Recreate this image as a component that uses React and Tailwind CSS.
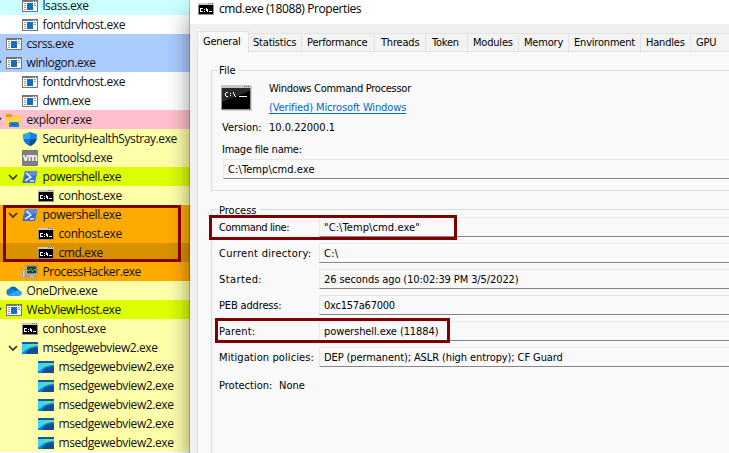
import React from "react";

const AppIcon = () => (
  <svg className="size-4 shrink-0" viewBox="0 0 16 16" shapeRendering="crispEdges">
    <rect x="0" y="2" width="16" height="12" fill="#747474" />
    <rect x="1" y="4" width="14" height="9" fill="#fff" />
    <rect x="5" y="5" width="6" height="7" fill="#0f70c4" />
    <rect x="2" y="5" width="2" height="1" fill="#999" />
    <rect x="2" y="7" width="2" height="1" fill="#999" />
    <rect x="2" y="9" width="2" height="1" fill="#999" />
    <rect x="2" y="11" width="2" height="1" fill="#999" />
    <rect x="12" y="5" width="2" height="1" fill="#999" />
    <rect x="12" y="7" width="2" height="1" fill="#999" />
    <rect x="11" y="3" width="1" height="1" fill="#ddd" />
    <rect x="13" y="3" width="1" height="1" fill="#ddd" />
  </svg>
);

const ConsoleIcon = () => (
  <svg className="size-4 shrink-0" viewBox="0 0 16 16" shapeRendering="crispEdges">
    <rect x="0" y="2" width="16" height="12" fill="#8d9196" />
    <rect x="0" y="2" width="16" height="2" fill="#c5cbd2" />
    <rect x="10" y="2" width="1" height="1" fill="#68717c" />
    <rect x="12" y="2" width="1" height="1" fill="#68717c" />
    <rect x="14" y="2" width="1" height="1" fill="#68717c" />
    <rect x="1" y="4" width="14" height="9" fill="#000" />
    <path
      d="M3 7h2v1h-2zM2 7h1v4h-1zM3 10h2v1h-2zM6 8h1v1h-1zM6 10h1v1h-1zM8 7h1v3h-1zM9 8h1v3h-1zM11 10h3v1h-3z"
      fill="#fff"
    />
  </svg>
);

const PowerShellIcon = () => (
  <svg className="size-4 shrink-0" viewBox="0 0 16 16">
    <path d="M3 2h12.400L13 14H.3z" fill="#3d6fd0" />
    <path d="M3 2h12.400l-.9 4.400H2z" fill="#5c8ae0" />
    <path d="M4.600 4.300l4.200 3.800-5.600 3.700" fill="none" stroke="#fff" strokeWidth="1.400" />
    <path d="M8 11.900h4" stroke="#fff" strokeWidth="1.300" />
  </svg>
);

const FolderIcon = () => (
  <svg className="size-4 shrink-0" viewBox="0 0 16 16">
    <path d="M0 2.800q0-.8.8-.8h4.400l1.600 1.700H16V8H0z" fill="#e2a008" />
    <path d="M0 5h5.600l1.200-1.200h8.400q.8 0 .8.8v8.600q0 .8-.8.8H.8q-.8 0-.8-.8z" fill="#ffd257" />
    <path d="M3 15v-3.500q0-1.500 1.500-1.500h7q1.500 0 1.500 1.500V15z" fill="#1a87d6" />
    <path d="M5 12.500h6" stroke="#0d5c9f" strokeWidth="1.200" />
  </svg>
);

const ShieldIcon = () => (
  <svg className="size-4 shrink-0" viewBox="0 0 16 16">
    <path d="M8 1q3 2 6.600 2v4.500Q14.500 12 8 15.300 1.500 12 1.300 7.500V3Q5 3 8 1z" fill="#0f77cf" />
    <path d="M8 1v7H1.300V3Q5 3 8 1z" fill="#28a9ea" />
    <path d="M8 8h6.600Q14.200 12.200 8 15.300z" fill="#0a4f9e" />
    <path d="M8 1q3 2 6.600 2v5H8z" fill="#1484da" />
  </svg>
);

const VmIcon = () => (
  <div className="flex size-4 shrink-0 items-center justify-center rounded-[1px] border border-[#777] bg-[#808080] font-['Open_Sans',sans-serif] text-[10px] font-bold leading-none tracking-[-0.6px] text-white">
    <span className="pb-[2px]">vm</span>
  </div>
);

const HackerIcon = () => (
  <svg className="size-4 shrink-0" viewBox="0 0 16 16">
    <rect x=".3" y="6" width="2.700" height="7.500" fill="#d4d4ce" stroke="#777" strokeWidth=".5" />
    <rect x="4" y="1.300" width="11.500" height="9.700" fill="#d7d7d7" stroke="#777" strokeWidth=".6" />
    <rect x="5" y="2.300" width="9.500" height="7.200" fill="#2b3a2e" />
    <path d="M5 6.500h2l1.500-2 2 3L12 5.500h2.500" fill="none" stroke="#35d456" />
    <path d="M8 11h4v1.500h2V14H5v-1.500h3z" fill="#c4c4c4" stroke="#777" strokeWidth=".4" />
  </svg>
);

const CloudIcon = () => (
  <svg className="size-4 shrink-0" viewBox="0 0 16 16">
    <path d="M3.600 12a3.500 3.500 0 0 1-.5-6.300A5 5 0 0 1 11.500 6a3.400 3.400 0 0 1 1 6z" fill="#0f62b8" />
    <path d="M3.600 12.700A3.500 3.500 0 0 1 3.100 5.800q2-.6 4 .5l6 4-.5 2.400z" fill="#1480d8" />
    <path d="M1.500 12l7-3.300 3-1.400q3.700-.6 4.500 2.500 0 3-3 3.100H4q-1.500 0-2.500-.9z" fill="#29a8ee" />
  </svg>
);

const EdgeIcon = () => (
  <svg className="size-4 shrink-0" viewBox="0 0 16 16">
    <rect y="2" width="16" height="12" fill="#3fd3f2" />
    <path d="M6 5q4-2 10-2v3Q11 5.500 7 7.500z" fill="#5fe0a0" />
    <path d="M16 6Q9 6 4.500 9.500 1.500 12 0 12.500V14h16z" fill="#0c86dc" />
    <path d="M16 7.500Q10 7 6 10.500 4 12.500 3.500 14H16z" fill="#124f96" />
    <rect y="2" width="16" height="2" fill="#1259a5" />
  </svg>
);

const Chevron = () => (
  <svg className="size-[18px] shrink-0" viewBox="0 0 18 18">
    <path d="M5 7l4 4 4-4" fill="none" stroke="#333" strokeWidth="1.700" />
  </svg>
);

const rows = [
  ["lsass.exe", 1, AppIcon, "bg-[#ccffff]", false],
  ["fontdrvhost.exe", 1, AppIcon, "bg-white", false],
  ["csrss.exe", 0, AppIcon, "bg-[#aaccff]", false],
  ["winlogon.exe", 0, AppIcon, "bg-[#aaccff]", true],
  ["fontdrvhost.exe", 1, AppIcon, "bg-white", false],
  ["dwm.exe", 1, AppIcon, "bg-white", false],
  ["explorer.exe", 0, FolderIcon, "bg-[#ffc0cb]", true],
  ["SecurityHealthSystray.exe", 1, ShieldIcon, "bg-[#ffffaa]", false],
  ["vmtoolsd.exe", 1, VmIcon, "bg-[#ffffaa]", false],
  ["powershell.exe", 1, PowerShellIcon, "bg-[#ddff00]", true],
  ["conhost.exe", 2, ConsoleIcon, "bg-[#ffffaa]", false],
  ["powershell.exe", 1, PowerShellIcon, "bg-[#ffaa00]", true],
  ["conhost.exe", 2, ConsoleIcon, "bg-[#ffaa00]", false],
  ["cmd.exe", 2, ConsoleIcon, "bg-[#d99100]", false],
  ["ProcessHacker.exe", 1, HackerIcon, "bg-[#ffaa00]", false],
  ["OneDrive.exe", 0, CloudIcon, "bg-[#ffffaa]", false],
  ["WebViewHost.exe", 0, AppIcon, "bg-[#ddff00]", true],
  ["conhost.exe", 1, ConsoleIcon, "bg-[#ffffaa]", false],
  ["msedgewebview2.exe", 1, EdgeIcon, "bg-[#ffffaa]", true],
  ["msedgewebview2.exe", 2, EdgeIcon, "bg-[#ffffaa]", false],
  ["msedgewebview2.exe", 2, EdgeIcon, "bg-[#ffffaa]", false],
  ["msedgewebview2.exe", 2, EdgeIcon, "bg-[#ffffaa]", false],
  ["msedgewebview2.exe", 2, EdgeIcon, "bg-[#ffffaa]", false],
  ["msedgewebview2.exe", 2, EdgeIcon, "bg-[#ffffaa]", false],
];

const indents = ["pl-0", "pl-4", "pl-8"];

const tabs = [
  ["Statistics", "w-[53px] pl-1"],
  ["Performance", "w-[73px] pl-[5px]"],
  ["Threads", "w-[51px] pl-1.5"],
  ["Token", "w-[42px] pl-1.5"],
  ["Modules", "w-[51px] pl-[5px]"],
  ["Memory", "w-[50px] pl-[5px]"],
  ["Environment", "w-[72px] pl-[5px]"],
  ["Handles", "w-[50px] pl-[5px]"],
  ["GPU", "w-[60px] pl-[5px]"],
];

const fields = [
  ["Command line:", "tracking-[-0.38px]", '"C:\\Temp\\cmd.exe"', "tracking-[0.1px]"],
  ["Current directory:", "tracking-[0.3px]", "C:\\", "tracking-[0.3px]"],
  ["Started:", "tracking-[0.4px]", "26 seconds ago (10:02:39 PM 3/5/2022)", "tracking-[-0.1px]"],
  ["PEB address:", "tracking-[-0.15px]", "0xc157a67000", "tracking-[-0.25px]"],
  ["Parent:", "tracking-[0.2px]", "powershell.exe (11884)", "tracking-[-0.1px]"],
  ["Mitigation policies:", "tracking-[0.1px]", "DEP (permanent); ASLR (high entropy); CF Guard", "tracking-[-0.1px]"],
];

function ProcessTree() {
  return (
    <div className="w-[190px] shrink-0 overflow-hidden bg-white font-['Open_Sans',sans-serif] text-[12px] tracking-[-0.41px] text-[#101010]">
      {rows.map(([name, depth, Icon, bg, open], i) => (
        <div key={i} className={`${i === 0 ? "h-[15px] pb-1 leading-[11px]" : "h-[19px] leading-[19px]"} ${bg}`}>
          <div className={`-ml-3 flex h-full items-center ${indents[depth]}`}>
            {open ? <Chevron /> : <div className="w-[18px] shrink-0" />}
            <Icon />
            <span className="ml-[4.500px] whitespace-nowrap">{name}</span>
          </div>
        </div>
      ))}
    </div>
  );
}

function LargeConsoleIcon() {
  return (
    <svg className="h-[26px] w-[31px] shrink-0" viewBox="0 0 31 26" shapeRendering="crispEdges">
      <rect x="1" y="1" width="30" height="25" fill="#d0d0d0" />
      <rect x="0" y="0" width="30" height="25" fill="#92979c" />
      <rect x="0" y="0" width="30" height="3" fill="#c0c9d0" />
      <rect x="23" y="1" width="1" height="1" fill="#59636c" />
      <rect x="25" y="1" width="1" height="1" fill="#59636c" />
      <rect x="27" y="1" width="1" height="1" fill="#59636c" />
      <rect x="1" y="3" width="28" height="21" fill="#000" />
      <path d="M1 3h28v3L1 17z" fill="#292929" shapeRendering="auto" />
      <path
        d="M5 7h2v1h-2zM4 8h1v3h-1zM5 11h2v1h-2zM9 8h1v1h-1zM9 10h1v1h-1zM12 7h1v2h-1zM13 9h1v2h-1zM14 11h1v1h-1zM18 11h8v1h-8z"
        fill="#fff"
      />
    </svg>
  );
}

function PropertiesWindow() {
  return (
    <div className="z-10 flex min-w-0 flex-1 flex-col bg-[#f0f0f0] font-['DejaVu_Sans_Condensed','DejaVu_Sans',sans-serif] text-[11px] text-black shadow-[0_0_0_1px_rgba(0,0,0,0.2),0_14px_22px_rgba(0,0,0,0.45)]">
      <div className="flex h-6 shrink-0 items-start bg-white pl-2 pt-px font-['Open_Sans',sans-serif] text-[12px]">
        <ConsoleIcon />
        <span className="ml-[5px] leading-4 tracking-[-0.41px]">cmd.exe (18088) Properties</span>
      </div>
      <div className="flex h-7 shrink-0 items-end pl-[7px] tracking-[-0.2px]">
        <div className="z-10 flex h-[21px] w-[52px] shrink-0 items-center border-l border-r border-t border-[#e3e3e3] bg-[#f9f9f9] pb-0.5 pl-[5px] leading-none">
          General
        </div>
        {tabs.map(([name, layout]) => (
          <div key={name} className={`flex h-[19px] shrink-0 items-center border-b border-r border-t border-[#e3e3e3] bg-[#f3f3f3] leading-none ${layout}`}>
            {name}
          </div>
        ))}
      </div>
      <div className="ml-[7px] flex-1 border-l border-[#e0e0e0] bg-[#f9f9f9] pl-[13px] pt-[18px]">
        <section className="h-[121px] border-b border-l border-t border-[#dcdcdc]">
          <div className="-mt-2 ml-1.5 h-4 w-[21px] bg-[#f9f9f9] pl-px leading-4">File</div>
          <div className="flex pl-[9px] pt-[3px]">
            <div className="w-[48px] pt-[3px]">
              <LargeConsoleIcon />
            </div>
            <div>
              <div className="h-[19px] whitespace-nowrap leading-[14px] tracking-[-0.28px]">Windows Command Processor</div>
              <div className="leading-[14px] tracking-[-0.12px] text-[#0066cc] underline underline-offset-2">
                (Verified) Microsoft Windows
              </div>
            </div>
          </div>
          <div className="mt-[6px] flex pl-[10px] leading-[14px]">
            <span className="w-[47px] shrink-0">Version:</span>
            <span>10.0.22000.1</span>
          </div>
          <div className="mt-[8px] pl-[10px] leading-[14px] tracking-[-0.25px]">Image file name:</div>
          <div className="ml-[11px] mt-[2px] h-5 border-b border-l border-t border-b-[#868686] border-l-[#e8e8e8] border-t-[#e8e8e8] pl-1 leading-5 tracking-[0.1px]">
            C:\Temp\cmd.exe
          </div>
        </section>
        <section className="mt-[18px] h-[260px] border-l border-t border-[#dcdcdc]">
          <div className="-mt-2 ml-1.5 h-4 w-[42px] bg-[#f9f9f9] pl-px leading-[18px]">Process</div>
          <div className="-mt-px flex flex-col gap-1.5 pl-[7px]">
            {fields.map(([label, labelTracking, value, valueTracking]) => (
              <div key={label} className="flex h-5">
                <div className={`w-[100px] shrink-0 whitespace-nowrap leading-[22px] ${labelTracking}`}>{label}</div>
                <div
                  className={`flex-1 whitespace-nowrap border-b border-l border-t border-b-[#868686] border-l-[#e8e8e8] border-t-[#e8e8e8] pl-1 leading-5 ${valueTracking}`}
                >
                  {value}
                </div>
              </div>
            ))}
          </div>
          <div className="mt-3 flex pl-[7px] leading-[14px]">
            <span className="w-[60px]">Protection:</span>
            <span>None</span>
          </div>
        </section>
      </div>
    </div>
  );
}

export default function App() {
  return (
    <div className="relative flex h-[453px] w-[729px] overflow-hidden">
      <ProcessTree />
      <PropertiesWindow />
      <div className="absolute left-[3px] top-[205px] z-20 h-[57px] w-[178px] border-[3px] border-[#800000]" />
      <div className="absolute left-[209px] top-[215px] z-20 h-[25px] w-[248px] border-[3px] border-[#800000]" />
      <div className="absolute left-[215px] top-[318px] z-20 h-[25px] w-[235px] border-[3px] border-[#800000]" />
    </div>
  );
}
